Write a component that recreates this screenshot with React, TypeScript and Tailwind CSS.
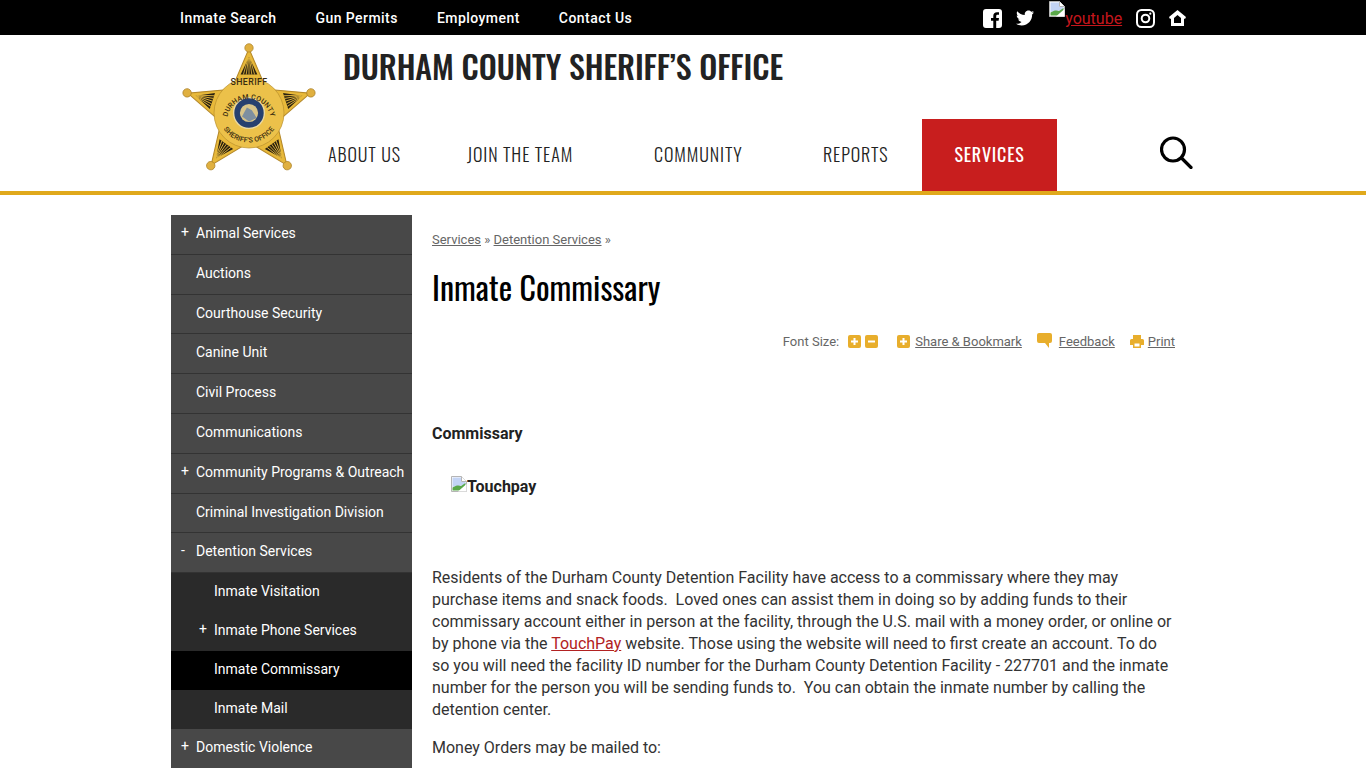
import React from "react";

const Broken = ({ className = "" }: { className?: string }) => (
  <svg viewBox="0 0 16 16" width="16" height="16" className={className}>
    <path d="M0.5 0.5H10.5L15.5 5.5V15.5H0.5Z" fill="#fff" stroke="#b5b5b5" />
    <path d="M1.5 1.5H10V6H14.5V9L1.5 11Z" fill="#c3d4f5" />
    <path d="M1.5 14.5V11.5C5 9 8 9 10 10L14.5 7V14.5Z" fill="#5aa84a" />
    <path d="M10.5 0.5V5.5H15.5" fill="#fff" stroke="#b5b5b5" />
    <path d="M7 15.5L15.5 8V15.5Z" fill="#fff" />
  </svg>
);

const Ray = ({ t }: { t: string }) => (
  <g transform={t}>
    <path d="M-12 -55L0 -80L12 -55Z" fill="#2a2110" />
    {[-8, -4, 0, 4, 8].map((x) => (
      <path key={x} d={`M${x} -55L${x * 0.15} -79`} stroke="#e6b93f" strokeWidth="1.200" />
    ))}
  </g>
);

const Badge = () => {
  const pts: string[] = [];
  for (let i = 0; i < 10; i++) {
    const r = i % 2 === 0 ? 92 : 42;
    const a = (i * 36 * Math.PI) / 180;
    pts.push(`${(r * Math.sin(a)).toFixed(1)},${(-r * Math.cos(a)).toFixed(1)}`);
  }
  return (
    <svg viewBox="-72 -72 144 144" width="144" height="144" className="shrink-0">
      <g transform="scale(0.7)">
        <polygon points={pts.join(" ")} fill="#e8b93a" stroke="#b5892a" strokeWidth="1.500" />
        {[0, 72, 144, 216, 288].map((a) => (
          <Ray key={a} t={`rotate(${a})`} />
        ))}
        {[0, 72, 144, 216, 288].map((a) => (
          <circle key={a} r="6" cx="0" cy="-93" fill="#e0b040" stroke="#a97f25" strokeWidth="1" transform={`rotate(${a})`} />
        ))}
        <circle r="50" fill="#ecc14a" stroke="#b98f2c" strokeWidth="1" />
        <circle r="22" fill="#27406f" stroke="#ecd9a0" strokeWidth="2" />
        <circle r="13" fill="#d8c48a" />
        <path d="M-10 5L-3 -8L4 -4L11 7L0 12Z" fill="#7d8fa0" />
        <defs>
          <path id="arcTop" d="M-31 6A31.500 31.500 0 0 1 31 6" />
          <path id="arcBot" d="M-42 10A43.500 43.500 0 0 0 42 10" />
        </defs>
        <text fontFamily="Roboto, sans-serif" fontSize="10" fontWeight="500" fill="#3a2c10" letterSpacing="0.200">
          <textPath href="#arcTop" startOffset="50%" textAnchor="middle">DURHAM COUNTY</textPath>
        </text>
        <text fontFamily="Roboto, sans-serif" fontSize="10" fontWeight="500" fill="#3a2c10" letterSpacing="0.200">
          <textPath href="#arcBot" startOffset="50%" textAnchor="middle">SHERIFF'S OFFICE</textPath>
        </text>
        <text x="0" y="-40" textAnchor="middle" fontFamily="Roboto, sans-serif" fontSize="12.500" fontWeight="500" fill="#3a2c10" letterSpacing="0.600">SHERIFF</text>
      </g>
    </svg>
  );
};

const Plus = ({ sign }: { sign: string }) => (
  <span className="w-[25px] pl-[10px] text-[14px] leading-none -mt-[2px] text-white">{sign}</span>
);

const MainRow = ({ label, sign }: { label: string; sign?: string }) => (
  <div className="h-[39.8px] pb-[2.7px] flex items-center border-b border-[#333333] bg-[#484848] text-white text-[14px] leading-none">
    <Plus sign={sign ?? ""} />
    <span>{label}</span>
  </div>
);

const SubRow = ({ label, sign, active }: { label: string; sign?: string; active?: boolean }) => (
  <div className={`h-[39px] pb-[3px] flex items-center text-white text-[14px] leading-none ${active ? "bg-black" : "bg-[#2a2a2a]"}`}>
    <span className="w-[43px] pl-[28px] text-[14px] leading-none -mt-[2px]">{sign ?? ""}</span>
    <span>{label}</span>
  </div>
);

const oswald = "font-['Oswald','Liberation_Sans_Narrow','Roboto_Condensed','Liberation_Sans',sans-serif]";

export default function App() {
  const nav = [
    ["ABOUT US", "w-[139px]"],
    ["JOIN THE TEAM", "w-[187px]"],
    ["COMMUNITY", "w-[169px]"],
    ["REPORTS", "w-[99px]"],
  ];
  return (
    <div className="h-[768px] overflow-hidden bg-white font-['Roboto',sans-serif] text-[#333333]">
      <div className="h-[35px] bg-black">
        <div className="w-[1024px] ml-[171px] h-full flex items-center text-white text-[14px] font-medium tracking-[0.45px]">
          <div className="flex pl-[9px] pt-[1px] gap-[39px]">
            <span>Inmate Search</span>
            <span>Gun Permits</span>
            <span>Employment</span>
            <span>Contact Us</span>
          </div>
          <div className="ml-[351px] flex items-center h-full font-normal tracking-normal">
            <svg width="19" height="19" viewBox="0 0 19 19" className="mt-[1px]">
              <path fillRule="evenodd" fill="#fff" d="M3 0H16A3 3 0 0 1 19 3V16A3 3 0 0 1 16 19H13.2V11.8H15.6L16 9H13.2V7.2C13.2 6.4 13.5 5.8 14.6 5.8H16V3.3C15.6 3.2 14.8 3.2 13.9 3.2C11.8 3.2 10.3 4.5 10.3 6.9V9H8V11.8H10.3V19H3A3 3 0 0 1 0 16V3A3 3 0 0 1 3 0Z" />
            </svg>
            <svg width="18" height="16" viewBox="0 0 24 20" className="ml-[14px] mt-[1px]">
              <path fill="#fff" d="M24 2.4c-.9.4-1.8.7-2.8.8 1-.6 1.8-1.6 2.2-2.7-1 .6-2 1-3.1 1.2C19.4.7 18.1 0 16.6 0c-3.2 0-5.5 3-4.8 6C7.7 5.8 4.1 3.9 1.7.9.4 3.1 1 6 3.2 7.4c-.8 0-1.6-.2-2.2-.6 0 2.3 1.6 4.4 4 4.9-.7.2-1.5.2-2.2.1.6 1.9 2.4 3.3 4.6 3.4C5.3 17.3 2.7 18 0 17.7 2.2 19.100 4.800 20 7.500 20c9.100 0 14.300-7.700 14-14.600 1-.7 1.800-1.600 2.500-3z" />
            </svg>
            <span className="ml-[15px] flex items-start h-[35px] pt-[1px] text-[16px] text-[#c4161c] underline leading-none">
              <Broken />
              <span className="mt-[10px]">youtube</span>
            </span>
            <svg width="19" height="19" viewBox="0 0 19 19" fill="none" stroke="#fff" className="ml-[14px] mt-[1px]">
              <rect x="1" y="1" width="17" height="17" rx="4.500" strokeWidth="2" />
              <circle cx="9.500" cy="9.500" r="3.800" strokeWidth="2" />
              <circle cx="14.300" cy="4.700" r="1.100" fill="#fff" stroke="none" />
            </svg>
            <svg width="17" height="16" viewBox="0 0 17 16" className="ml-[14px] mt-[1px]">
              <path fillRule="evenodd" fill="#fff" d="M8.500 0L17 7L16 9L15 8.400V16H2V8.400L1 9L0 7ZM8.500 5L5 8V13H12V8Z" />
            </svg>
          </div>
        </div>
      </div>

      <div className="h-[160px] border-b-4 border-[#e0a91c]">
        <div className="w-[1024px] ml-[171px] h-full flex">
          <div className="w-[157px] shrink-0 pl-[6px] pt-[6px]"><Badge /></div>
          <div className="flex-1 flex flex-col">
            <div className={`h-[84px] pl-[15px] pt-[9px] text-[32px] font-medium tracking-[-0.07px] leading-[44px] text-[#222222] whitespace-nowrap ${oswald}`}>
              DURHAM COUNTY SHERIFF’S OFFICE
            </div>
            <div className="h-[72px] flex items-stretch">
              {nav.map(([n, w]) => (
                <div key={n} className={`${w} flex items-center pb-[2px] text-[18px] font-[350] tracking-[0.9px] text-[#222222] whitespace-nowrap ${oswald}`}>{n}</div>
              ))}
              <div className={`w-[135px] bg-[#c81e1e] text-white flex items-center justify-center pb-[2px] text-[18px] tracking-[0.8px] ${oswald}`}>SERVICES</div>
              <div className="flex items-center ml-[103px] mb-[5px]">
                <svg width="33" height="33" viewBox="0 0 33 33" fill="none" stroke="#000" strokeWidth="3.200">
                  <circle cx="13" cy="13.500" r="11.500" />
                  <path d="M21.500 22L31 31.500" strokeLinecap="round" />
                </svg>
              </div>
            </div>
          </div>
        </div>
      </div>

      <div className="w-[1024px] ml-[171px] flex pt-[20px]">
        <div className="w-[241px] shrink-0">
          <MainRow label="Animal Services" sign="+" />
          <MainRow label="Auctions" />
          <MainRow label="Courthouse Security" />
          <MainRow label="Canine Unit" />
          <MainRow label="Civil Process" />
          <MainRow label="Communications" />
          <MainRow label="Community Programs & Outreach" sign="+" />
          <MainRow label="Criminal Investigation Division" />
          <MainRow label="Detention Services" sign="-" />
          <SubRow label="Inmate Visitation" />
          <SubRow label="Inmate Phone Services" sign="+" />
          <SubRow label="Inmate Commissary" active />
          <SubRow label="Inmate Mail" />
          <MainRow label="Domestic Violence" sign="+" />
        </div>

        <div className="w-[743px] ml-[20px]">
          <div className="pt-[17px] text-[13px] leading-[16px] text-[#666666]">
            <span className="underline">Services</span> » <span className="underline">Detention Services</span> »
          </div>
          <h1 className={`mt-[18px] text-[32px] leading-[42px] text-black whitespace-nowrap ${oswald}`}>Inmate Commissary</h1>
          <div className="mt-[25px] h-[16px] flex items-center justify-end text-[13px] leading-none text-[#666666]">
            <span>Font Size:</span>
            <svg width="13" height="13" viewBox="0 0 13 13" className="ml-[9px]"><rect width="13" height="13" rx="2" fill="#e8ae2c" /><path d="M6.500 3V10M3 6.500H10" stroke="#fff" strokeWidth="2" /></svg>
            <svg width="13" height="13" viewBox="0 0 13 13" className="ml-[4px]"><rect width="13" height="13" rx="2" fill="#e8ae2c" /><path d="M3 6.500H10" stroke="#fff" strokeWidth="2" /></svg>
            <svg width="13" height="13" viewBox="0 0 13 13" className="ml-[19px]"><rect width="13" height="13" rx="2" fill="#e8ae2c" /><path d="M6.500 3V10M3 6.500H10" stroke="#fff" strokeWidth="2" /></svg>
            <span className="ml-[5px] underline">Share &amp; Bookmark</span>
            <svg width="15" height="15" viewBox="0 0 15 15" className="ml-[15px] -mt-[1px]"><path d="M2 0H13A2 2 0 0 1 15 2V8A2 2 0 0 1 13 10H12V15L8 10H2A2 2 0 0 1 0 8V2A2 2 0 0 1 2 0Z" fill="#e8ae2c" /></svg>
            <span className="ml-[7px] underline">Feedback</span>
            <svg width="14" height="13" viewBox="0 0 14 13" className="ml-[15px]"><path fillRule="evenodd" d="M3 0H11V4H12.500A1.500 1.500 0 0 1 14 5.500V10H11V13H3V10H0V5.500A1.500 1.500 0 0 1 1.500 4H3ZM4.500 8.500V11.500H9.500V8.500Z" fill="#e8ae2c" /></svg>
            <span className="ml-[4px] underline">Print</span>
          </div>
          <p className="mt-[74px] text-[16px] leading-[22px] font-bold text-[#222222]">Commissary</p>
          <div className="mt-[31px] pl-[19px] flex items-start text-[16px] leading-[22px] font-bold text-[#222222]">
            <Broken />
            <span>Touchpay</span>
          </div>
          <p className="mt-[69px] text-[16px] leading-[22px] text-[#333333]">
            Residents of the Durham County Detention Facility have access to a commissary where they may purchase items and snack foods.&nbsp; Loved ones can assist them in doing so by adding funds to their commissary account either in person at the facility, through the U.S. mail with a money order, or online or by phone via the <span className="underline text-[#b22222]">TouchPay</span> website. Those using the website will need to first create an account. To do so you will need the facility ID number for the Durham County Detention Facility - 227701 and the inmate number for the person you will be sending funds to.&nbsp; You can obtain the inmate number by calling the detention center.
          </p>
          <p className="mt-[16px] text-[16px] leading-[22px] text-[#333333]">Money Orders may be mailed to:</p>
        </div>
      </div>
    </div>
  );
}
